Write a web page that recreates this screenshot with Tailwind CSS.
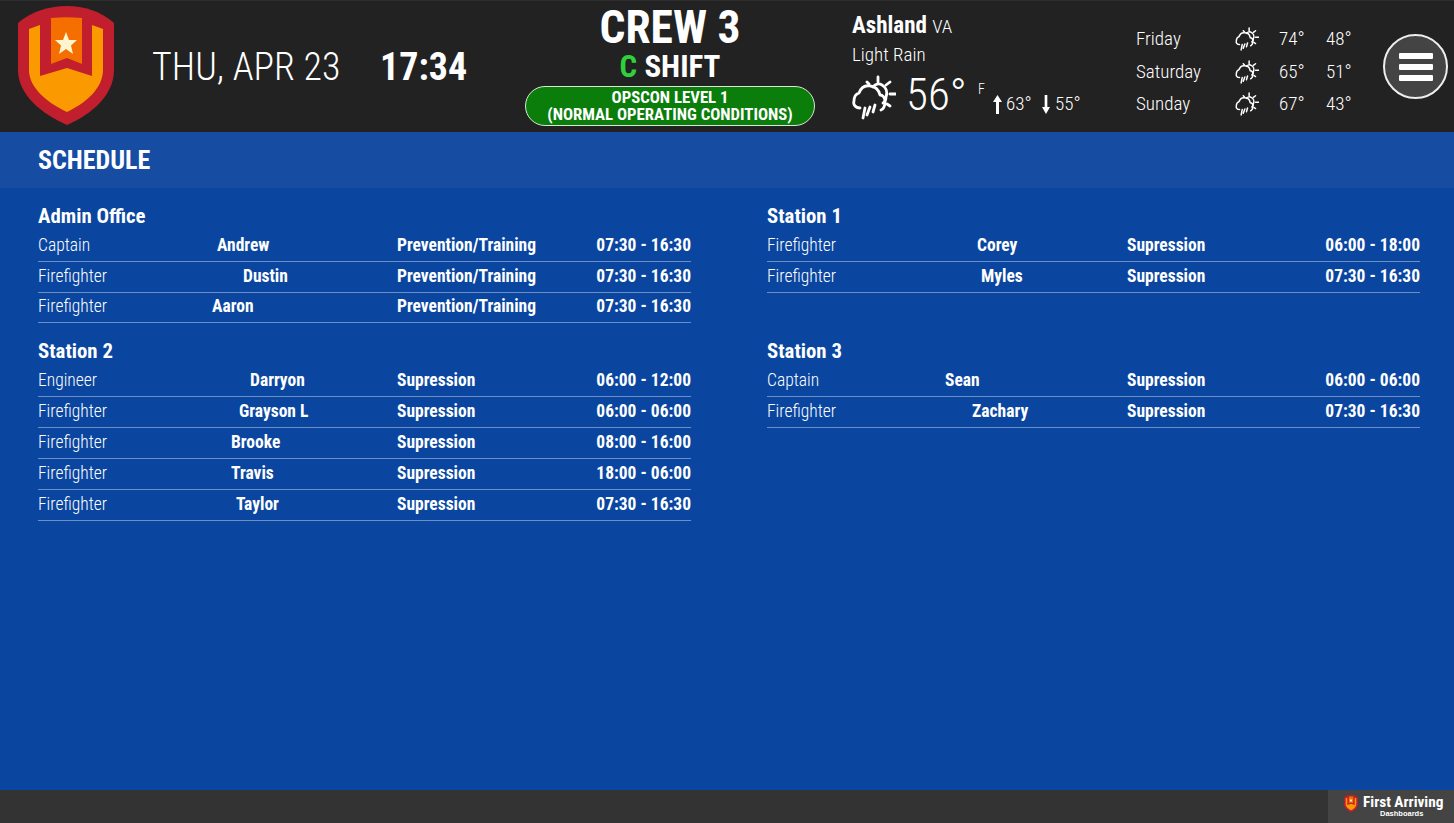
<!DOCTYPE html>
<html><head><meta charset="utf-8"><script src="https://cdn.jsdelivr.net/npm/@tailwindcss/browser@4"></script></head>
<body class="font-['Roboto',sans-serif] [font-stretch:75%] bg-[#0a46a0] text-white w-[1454px] h-[823px] overflow-hidden flex flex-col">
<svg class="hidden"><defs>
<symbol id="wx" viewBox="0 0 44 45"><g fill="none" stroke="#fff" stroke-width="2.800" stroke-linecap="round" stroke-linejoin="round">
<path d="M8 33C3 33 1 29 2 26C2 22 4 19 7 18C9 13 13 10 18 11C23 11 27 15 28 20C31 20 33 23 33 26C33 30 32 34 29 35"/>
<path d="M21 12C23 9 27 8 30 10C34 12 36 17 34 22C34 25 33 27 31 28"/>
<path d="M26 2V7M34 10L38 7M38 19H44M35 29L38 31M15 7L17 9"/>
<path d="M13 33L11 43M18 32L15 40M23 30L21 37"/></g></symbol>
<symbol id="shield" viewBox="18 6 96 119">
<path fill="#c11f2e" d="M18 23C32 11 50 6 67 6C84 6 100 11 114 23V70C114 95 92 114 67 125C42 114 18 95 18 70Z"/>
<path fill="#fb9a00" d="M29 29L40 25V76L67 68L92 76V25L103 29V70C103 88 86 103 67 112C48 103 29 88 29 70Z"/>
<path fill="#f46f00" d="M51 18C61 17 72 17 82 18V64L67 58L51 64Z"/>
<path fill="#fdf5d0" d="M66 32L69 40L77 40L71 45.500L73 54L66 49L59 54L61 45.500L55 40L63 40Z"/>
</symbol></defs></svg>

<header class="h-[132px] bg-[#222222] border-t border-[#2e2e2e] flex shrink-0 items-center relative">
  <svg class="w-[96px] h-[119px] ml-[18px] shrink-0 self-start mt-[5px]"><use href="#shield"/></svg>
  <div class="ml-[38px] w-[228px] text-[38px] font-light leading-none whitespace-nowrap">THU, APR 23</div>
  <div class="w-[145px] text-[38px] font-bold leading-none">17:34</div>
  <div class="w-[290px] self-start flex flex-col items-center">
    <div class="text-[45.500px] font-bold leading-[44px] mt-[5px]">CREW 3</div>
    <div class="text-[31px] font-bold leading-[34px]"><span class="text-[#2ed13c]">C</span> SHIFT</div>
    <div class="w-[290px] h-[40px] mt-[2px] rounded-[20px] bg-[#0a7d0a] border border-[#d8e8d8] flex flex-col items-center justify-center text-[16.750px] font-bold leading-[17px] whitespace-nowrap"><span>OPSCON LEVEL 1</span><span>(NORMAL OPERATING CONDITIONS)</span></div>
  </div>
  <div class="ml-[37px] w-[284px] self-start flex flex-col">
    <div class="mt-[11px] leading-[28px] text-[23px] font-bold">Ashland <span class="text-[19px] font-light">VA</span></div>
    <div class="leading-[28px] text-[19px] font-light">Light Rain</div>
    <div class="flex items-start h-[46px] mt-[4px]">
      <svg class="w-[44px] h-[45px] shrink-0 mt-[2px]"><use href="#wx"/></svg>
      <span class="ml-[10px] text-[45px] font-light leading-[46px] -mt-[1px] w-[72px]">56°</span>
      <span class="text-[14px] font-light mt-[6px] w-[13px]">F</span>
      <svg class="ml-[2px] w-[9px] h-[19px] mt-[22px]" viewBox="0 0 9 19" preserveAspectRatio="none"><path fill="#fff" d="M4.500 0L9 7H6V19H3V7H0Z"/></svg>
      <span class="text-[19px] font-light mt-[17px] ml-[4px] w-[35px]">63°</span>
      <svg class="ml-[1px] w-[8px] h-[19px] mt-[22px]" viewBox="0 0 9 19" preserveAspectRatio="none"><path fill="#fff" d="M4.500 19L9 12H6V0H3V12H0Z"/></svg>
      <span class="text-[19px] font-light mt-[17px] ml-[5px]">55°</span>
    </div>
  </div>
  <div class="w-[247px] self-start mt-[22px] flex flex-col text-[19px] font-light leading-[32.500px]">
    <div class="flex items-center"><span class="w-[99px]">Friday</span><svg class="w-[24px] h-[24px]"><use href="#wx"/></svg><span class="ml-[20px] w-[47px]">74°</span><span>48°</span></div>
    <div class="flex items-center"><span class="w-[99px]">Saturday</span><svg class="w-[24px] h-[24px]"><use href="#wx"/></svg><span class="ml-[20px] w-[47px]">65°</span><span>51°</span></div>
    <div class="flex items-center"><span class="w-[99px]">Sunday</span><svg class="w-[24px] h-[24px]"><use href="#wx"/></svg><span class="ml-[20px] w-[47px]">67°</span><span>43°</span></div>
  </div>
  <div class="w-[65px] h-[65px] rounded-full bg-[#444444] border-2 border-[#eeeeee] flex flex-col items-center justify-center gap-[5px] shrink-0">
    <span class="w-[34px] h-[6px] rounded-[1px] bg-white"></span><span class="w-[34px] h-[6px] rounded-[1px] bg-white"></span><span class="w-[34px] h-[6px] rounded-[1px] bg-white"></span>
  </div>
</header>

<div class="h-[56px] shrink-0 bg-[#164da3] px-[38px] flex items-center text-[26px] font-bold">SCHEDULE</div>

<main class="flex-1 pt-[16px] pl-[38px] pr-[34px] grid grid-cols-2 gap-x-[76px] gap-y-[15.750px] content-start text-[17.500px]">
  <section>
    <h2 class="h-[27px] leading-[25px] text-[20.800px] font-bold">Admin Office</h2>
    <div class="flex items-center h-[30.750px] pb-[2px] border-b border-white/40"><span class="w-[170px] font-light">Captain</span><b class="ml-[9px] w-[180px]">Andrew</b><b class="flex-1">Prevention/Training</b><b>07:30 - 16:30</b></div>
    <div class="flex items-center h-[30.750px] pb-[2px] border-b border-white/40"><span class="w-[170px] font-light">Firefighter</span><b class="ml-[35px] w-[154px]">Dustin</b><b class="flex-1">Prevention/Training</b><b>07:30 - 16:30</b></div>
    <div class="flex items-center h-[30.750px] pb-[2px] border-b border-white/40"><span class="w-[170px] font-light">Firefighter</span><b class="ml-[4px] w-[185px]">Aaron</b><b class="flex-1">Prevention/Training</b><b>07:30 - 16:30</b></div>
  </section>
  <section>
    <h2 class="h-[27px] leading-[25px] text-[20.800px] font-bold">Station 1</h2>
    <div class="flex items-center h-[30.750px] pb-[2px] border-b border-white/40"><span class="w-[170px] font-light">Firefighter</span><b class="ml-[40px] w-[150px]">Corey</b><b class="flex-1">Supression</b><b>06:00 - 18:00</b></div>
    <div class="flex items-center h-[30.750px] pb-[2px] border-b border-white/40"><span class="w-[170px] font-light">Firefighter</span><b class="ml-[44px] w-[146px]">Myles</b><b class="flex-1">Supression</b><b>07:30 - 16:30</b></div>
  </section>
  <section>
    <h2 class="h-[27px] leading-[25px] text-[20.800px] font-bold">Station 2</h2>
    <div class="flex items-center h-[31px] pb-[2px] border-b border-white/40"><span class="w-[170px] font-light">Engineer</span><b class="ml-[42px] w-[147px]">Darryon</b><b class="flex-1">Supression</b><b>06:00 - 12:00</b></div>
    <div class="flex items-center h-[31px] pb-[2px] border-b border-white/40"><span class="w-[170px] font-light">Firefighter</span><b class="ml-[31px] w-[158px]">Grayson L</b><b class="flex-1">Supression</b><b>06:00 - 06:00</b></div>
    <div class="flex items-center h-[31px] pb-[2px] border-b border-white/40"><span class="w-[170px] font-light">Firefighter</span><b class="ml-[23px] w-[166px]">Brooke</b><b class="flex-1">Supression</b><b>08:00 - 16:00</b></div>
    <div class="flex items-center h-[31px] pb-[2px] border-b border-white/40"><span class="w-[170px] font-light">Firefighter</span><b class="ml-[23px] w-[166px]">Travis</b><b class="flex-1">Supression</b><b>18:00 - 06:00</b></div>
    <div class="flex items-center h-[31px] pb-[2px] border-b border-white/40"><span class="w-[170px] font-light">Firefighter</span><b class="ml-[28px] w-[161px]">Taylor</b><b class="flex-1">Supression</b><b>07:30 - 16:30</b></div>
  </section>
  <section>
    <h2 class="h-[27px] leading-[25px] text-[20.800px] font-bold">Station 3</h2>
    <div class="flex items-center h-[31px] pb-[2px] border-b border-white/40"><span class="w-[170px] font-light">Captain</span><b class="ml-[8px] w-[182px]">Sean</b><b class="flex-1">Supression</b><b>06:00 - 06:00</b></div>
    <div class="flex items-center h-[31px] pb-[2px] border-b border-white/40"><span class="w-[170px] font-light">Firefighter</span><b class="ml-[35px] w-[155px]">Zachary</b><b class="flex-1">Supression</b><b>07:30 - 16:30</b></div>
  </section>
</main>

<footer class="h-[33px] shrink-0 bg-[#333333] flex justify-end">
  <div class="w-[126px] bg-[#444444] flex items-start pl-[16px] pt-[5px]">
    <svg class="w-[14px] h-[17px] shrink-0"><use href="#shield"/></svg>
    <div class="ml-[5px] flex flex-col items-center">
      <span class="text-[15.300px] font-bold leading-[15px] whitespace-nowrap">First Arriving</span>
      <span class="text-[7.500px] font-bold leading-[8px] -ml-[3px] font-['Liberation_Sans',sans-serif]">Dashboards</span>
    </div>
  </div>
</footer>
</body></html>
